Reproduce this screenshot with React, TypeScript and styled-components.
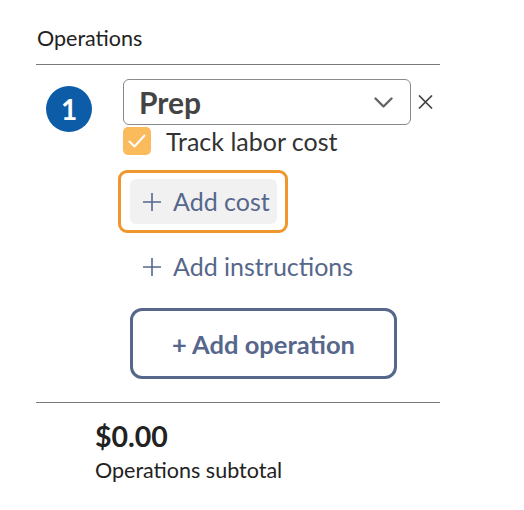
import React, { useState } from "react";
import styled, { createGlobalStyle } from "styled-components";

const GlobalStyle = createGlobalStyle`
  html, body {
    margin: 0;
    padding: 0;
    background: #ffffff;
  }
  body {
    font-family: Lato, "Noto Sans", sans-serif;
    color: #222222;
  }
`;

const Colors = {
  ink: "#222222",
  text: "#333333",
  rule: "#7a7a7a",
  slate: "#56678b",
  blue: "#0d5ca8",
  amber: "#f9bb5c",
  focus: "#ef972c",
  chip: "#f1f1f2",
  gray: "#666666",
};

const Panel = styled.div`
  width: 404px;
  margin-left: 36px;
  padding-top: 25px;
`;

const SectionTitle = styled.div`
  font-size: 21.5px;
  line-height: 26px;
  color: ${Colors.ink};
  padding-left: 1px;
  padding-bottom: 13px;
  border-bottom: 1px solid ${Colors.rule};
`;

const OperationRow = styled.div`
  display: flex;
  align-items: flex-start;
  padding-top: 14px;
`;

const StepBadge = styled.div`
  flex: 0 0 46px;
  width: 46px;
  height: 46px;
  margin: 7px 0 0 10px;
  border-radius: 50%;
  background: ${Colors.blue};
  color: #ffffff;
  font-size: 28px;
  font-weight: 700;
  display: flex;
  align-items: center;
  justify-content: center;
`;

const OperationBody = styled.div`
  margin-left: 31px;
  display: flex;
  flex-direction: column;
  align-items: flex-start;
`;

const SelectLine = styled.div`
  display: flex;
  align-items: center;
`;

const SelectBox = styled.div`
  box-sizing: border-box;
  width: 288px;
  height: 46px;
  border: 1px solid #8a8a8a;
  border-radius: 6px;
  display: flex;
  align-items: center;
  justify-content: space-between;
  padding: 0 17px 0 15px;
  font-size: 30px;
  font-weight: 700;
  color: #444444;
`;

const RemoveButton = styled.button`
  border: none;
  background: none;
  padding: 0;
  margin-left: 6px;
  width: 16px;
  height: 16px;
  display: flex;
  align-items: center;
  justify-content: center;
  cursor: pointer;
`;

const CheckLine = styled.label`
  display: flex;
  align-items: center;
  gap: 15px;
  margin-top: 2px;
  font-size: 25px;
  line-height: 28px;
  color: ${Colors.text};
  cursor: pointer;
`;

const CheckBox = styled.span<{ checked: boolean }>`
  width: 28px;
  height: 28px;
  border-radius: 5px;
  background: ${(p) => (p.checked ? Colors.amber : "#ffffff")};
  display: flex;
  align-items: center;
  justify-content: center;
`;

const FocusRing = styled.div`
  margin: 15px 0 0 -5px;
  padding: 6px 8px 6px 9px;
  border: 3px solid ${Colors.focus};
  border-radius: 9px;
`;

const LinkButton = styled.button<{ filled?: boolean }>`
  display: flex;
  align-items: center;
  gap: 11px;
  border: none;
  border-radius: 6px;
  background: ${(p) => (p.filled ? Colors.chip : "transparent")};
  padding: ${(p) => (p.filled ? "9px 7px 9px 12px" : "0 0 0 19px")};
  font-family: inherit;
  font-size: 25px;
  line-height: 27px;
  color: ${Colors.slate};
  cursor: pointer;
`;

const InstructionsLine = styled.div`
  margin-top: 20px;
`;

const AddOperation = styled.button`
  box-sizing: border-box;
  width: 267px;
  height: 71px;
  margin: 28px 0 0 7px;
  border: 3px solid ${Colors.slate};
  border-radius: 12px;
  background: #ffffff;
  font-family: inherit;
  font-size: 25.5px;
  font-weight: 700;
  color: ${Colors.slate};
  cursor: pointer;
`;

const Totals = styled.div`
  margin-top: 23px;
  border-top: 1px solid ${Colors.rule};
  padding: 16px 0 0 59px;
`;

const Amount = styled.div`
  font-size: 28.5px;
  font-weight: 700;
  line-height: 34px;
  color: ${Colors.ink};
`;

const AmountLabel = styled.div`
  margin-top: 4px;
  font-size: 21.5px;
  line-height: 26px;
  color: ${Colors.ink};
`;

const Plus = () => (
  <svg width="20" height="20" viewBox="0 0 20 20" fill="none">
    <path d="M10 1v18M1 10h18" stroke={Colors.slate} strokeWidth="1.6" />
  </svg>
);

const Chevron = () => (
  <svg width="19" height="11" viewBox="0 0 19 11" fill="none">
    <path d="M1.5 1.5l8 8 8-8" stroke={Colors.gray} strokeWidth="2.4" strokeLinecap="round" strokeLinejoin="round" />
  </svg>
);

const Cross = () => (
  <svg width="15" height="14" viewBox="0 0 15 14" fill="none">
    <path d="M1 0.5l13 13M14 0.5l-13 13" stroke="#444444" strokeWidth="1.7" />
  </svg>
);

const Tick = () => (
  <svg width="18" height="14" viewBox="0 0 18 14" fill="none">
    <path d="M1.5 7.5l5 5 10-11" stroke="#ffffff" strokeWidth="2" strokeLinecap="round" strokeLinejoin="round" />
  </svg>
);

const App: React.FC = () => {
  const [trackLabor, setTrackLabor] = useState(true);

  return (
    <>
      <GlobalStyle />
      <Panel>
        <SectionTitle>Operations</SectionTitle>
        <OperationRow>
          <StepBadge>1</StepBadge>
          <OperationBody>
            <SelectLine>
              <SelectBox>
                <span>Prep</span>
                <Chevron />
              </SelectBox>
              <RemoveButton aria-label="Remove operation">
                <Cross />
              </RemoveButton>
            </SelectLine>
            <CheckLine onClick={() => setTrackLabor(!trackLabor)}>
              <CheckBox checked={trackLabor}>{trackLabor && <Tick />}</CheckBox>
              Track labor cost
            </CheckLine>
            <FocusRing>
              <LinkButton filled>
                <Plus />
                Add cost
              </LinkButton>
            </FocusRing>
            <InstructionsLine>
              <LinkButton>
                <Plus />
                Add instructions
              </LinkButton>
            </InstructionsLine>
            <AddOperation>+ Add operation</AddOperation>
          </OperationBody>
        </OperationRow>
        <Totals>
          <Amount>$0.00</Amount>
          <AmountLabel>Operations subtotal</AmountLabel>
        </Totals>
      </Panel>
    </>
  );
};

export default App;
